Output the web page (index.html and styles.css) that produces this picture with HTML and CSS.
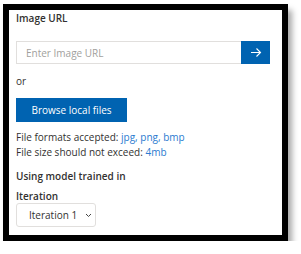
FILE: index.html
```html
<!DOCTYPE html>
<html lang="en">
<head>
    <meta charset="UTF-8">
    <title>Image source</title>
    <link rel="stylesheet" href="styles.css">
</head>
<body>
    <div class="frame">
        <div class="label">Image URL</div>
        <div class="url-row">
            <input type="text" class="url-input" placeholder="Enter Image URL">
            <button type="button" class="go-button">
                <svg width="12" height="11" viewBox="0 0 12 11">
                    <path d="M1 5.5H10.5M6.5 1.5L10.5 5.5L6.5 9.5" fill="none" stroke="#fff" stroke-width="1.1"/>
                </svg>
            </button>
        </div>
        <div class="or">or</div>
        <button type="button" class="browse">Browse local files</button>
        <div class="info">
            <div>File formats accepted: <span class="link">jpg, png, bmp</span></div>
            <div>File size should not exceed: <span class="link">4mb</span></div>
        </div>
        <div class="model">Using model trained in</div>
        <div class="iter-label">Iteration</div>
        <div class="select">
            <span>Iteration 1</span>
            <svg width="7" height="5" viewBox="0 0 7 5">
                <path d="M1 1L3.5 3.5L6 1" fill="none" stroke="#444" stroke-width="1"/>
            </svg>
        </div>
    </div>
</body>
</html>
```

FILE: styles.css
```css
body {
    margin: 0;
    background-color: #fff;
    font-family: "Open Sans", sans-serif;
    font-size: 10px;
    color: #323130;
}
.frame {
    margin: 4px 0 0 3px;
    width: 266px;
    height: 225px;
    border: 6px solid #000;
    box-shadow: 4px 6px 6px rgba(0, 0, 0, 0.35);
    padding: 0 0 0 7px;
}
.label {
    font-weight: 600;
    margin-top: 1px;
    line-height: 15px;
}
.url-row {
    display: flex;
    margin-top: 15px;
    height: 23px;
}
.url-input {
    width: 225px;
    height: 23px;
    box-sizing: border-box;
    border: 1px solid #e1dfdd;
    border-right: none;
    padding: 0 0 0 9px;
    margin: 0;
    font-family: "Open Sans", sans-serif;
    font-size: 10px;
    outline: none;
}
.url-input::placeholder {
    color: #a19f9d;
}
.go-button {
    width: 29px;
    height: 23px;
    margin: 0;
    padding: 0;
    border: none;
    background-color: #0063b1;
    display: flex;
    align-items: center;
    justify-content: center;
}
.or {
    margin-top: 10px;
    line-height: 15px;
}
.browse {
    display: block;
    margin-top: 9px;
    width: 111px;
    height: 24px;
    padding: 0;
    border: none;
    background-color: #0063b1;
    color: #fff;
    font-family: "Open Sans", sans-serif;
    font-size: 10px;
}
.info {
    margin-top: 8px;
    line-height: 15px;
}
.link {
    color: #2b7bd0;
}
.model {
    margin-top: 9px;
    line-height: 15px;
    font-weight: 600;
}
.iter-label {
    margin-top: 6px;
    line-height: 12px;
    font-weight: 600;
}
.select {
    width: 80px;
    height: 24px;
    box-sizing: border-box;
    margin-top: 1px;
    border: 1px solid #e1dfdd;
    border-radius: 3px;
    display: flex;
    align-items: center;
    gap: 8px;
    padding: 0 0 0 12px;
    white-space: nowrap;
}
```
